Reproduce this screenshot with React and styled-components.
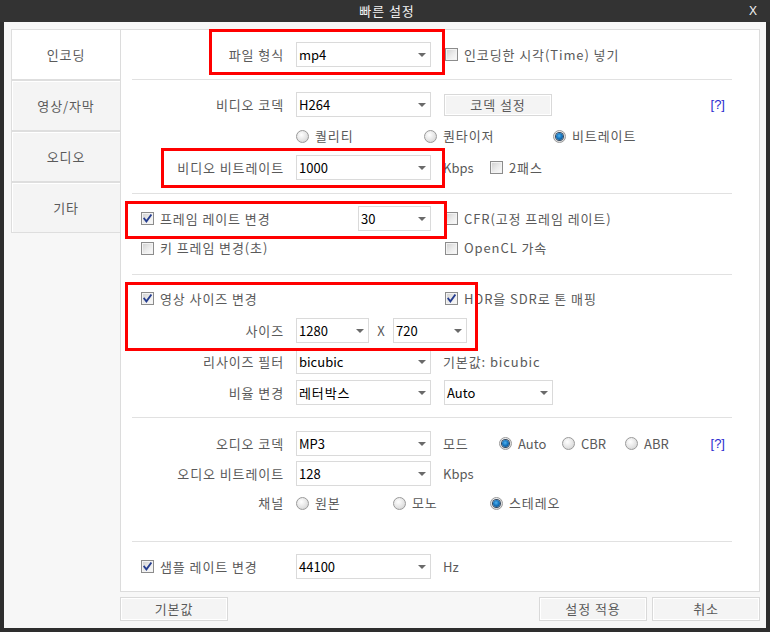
import React from 'react';
import styled, { createGlobalStyle } from 'styled-components';

const Global = createGlobalStyle`
  html, body { margin: 0; padding: 0; background: #2b2b2b; }
  body { font-family: "Noto Sans CJK KR", "Noto Sans", sans-serif; font-size: 13px; line-height: 1.2; }
  * { box-sizing: border-box; }
`;

const KO = '0.9px';

const Window = styled.div`
  width: 770px;
  height: 632px;
  background: #2e2e2e;
  display: flex;
  flex-direction: column;
  padding: 0 4px 4px 4px;
`;

const TitleBar = styled.div`
  height: 22px;
  display: grid;
  grid-template-columns: 1fr auto 1fr;
  align-items: center;
  color: #f2f2f2;
  font-size: 13px;
  margin: 0 -4px;
  background: #333;
`;

const Title = styled.div`
  grid-column: 2;
  padding-left: 4px;
  letter-spacing: ${KO};
`;

const Close = styled.div`
  grid-column: 3;
  justify-self: end;
  margin-right: 13px;
  font-family: "Liberation Sans", sans-serif;
  font-size: 12px;
`;

const Body = styled.div`
  flex: 1;
  background: #f7f7f7;
  display: grid;
  grid-template-columns: 109px 640px;
  grid-template-rows: 563px 24px;
  row-gap: 5px;
  padding: 7px 6px 0 7px;
`;

const Tabs = styled.div`
  display: flex;
  flex-direction: column;
`;

const Tab = styled.div`
  height: 51px;
  border: 1px solid #dedede;
  border-right: none;
  background: ${p => (p.$active ? '#ffffff' : '#f4f4f4')};
  box-shadow: ${p => (p.$active ? 'none' : 'inset 1px 1px 0 #fff')};
  display: flex;
  align-items: center;
  justify-content: center;
  color: #5a5a5a;
  font-size: 13px;
  letter-spacing: ${KO};
`;

const Panel = styled.div`
  position: relative;
  background: #fff;
  border: 1px solid #dcdcdc;
  display: flex;
  flex-direction: column;
`;

const Section = styled.div`
  display: flex;
  flex-direction: column;
  padding: ${p => p.$pt}px 0 ${p => p.$pb}px 0;
`;

const Divider = styled.div`
  height: 1px;
  background: #e1e1e1;
  margin: 0 27px 0 11px;
`;

const Row = styled.div`
  display: flex;
  align-items: center;
  height: ${p => p.$h || 25}px;
  margin-top: ${p => p.$mt || 0}px;
  padding-left: ${p => p.$pl || 0}px;
  color: #5a5a5a;
`;

const Label = styled.div`
  flex: 0 0 163px;
  margin-right: 12px;
  text-align: right;
  color: #5a5a5a;
  white-space: nowrap;
  letter-spacing: ${KO};
`;

const SelectBox = styled.div`
  flex: 0 0 ${p => p.$w}px;
  width: ${p => p.$w}px;
  height: 25px;
  border: 1px solid #dadada;
  background: #fff;
  display: flex;
  align-items: center;
  padding-left: 2px;
  margin-left: ${p => p.$ml || 0}px;
  color: #000;
  white-space: nowrap;
  letter-spacing: ${p => (p.$ko ? KO : '0')};
`;

const Arrow = styled.span`
  margin-left: auto;
  margin-right: 4px;
  width: 0;
  height: 0;
  border-left: 4px solid transparent;
  border-right: 4px solid transparent;
  border-top: 4px solid #6a6a6a;
`;

const Text = styled.div`
  flex: 0 0 ${p => (p.$w ? `${p.$w}px` : 'auto')};
  margin-left: ${p => p.$ml || 0}px;
  text-align: ${p => (p.$center ? 'center' : 'left')};
  color: #5a5a5a;
  white-space: nowrap;
  letter-spacing: ${p => (p.$ko ? KO : '0')};
`;

const Help = styled.div`
  margin-left: auto;
  margin-right: 34px;
  color: #2b2bd0;
  font-family: "Liberation Sans", sans-serif;
  font-size: 13px;
`;

const Item = styled.div`
  flex: 0 0 ${p => (p.$w ? `${p.$w}px` : 'auto')};
  margin-left: ${p => p.$ml || 0}px;
  display: flex;
  align-items: center;
  gap: 6px;
  color: #5a5a5a;
  white-space: nowrap;
  letter-spacing: ${p => (p.$latin ? '0' : KO)};
`;

const CheckBox = styled.span`
  flex: 0 0 13px;
  width: 13px;
  height: 13px;
  border: 1px solid #8c8c8c;
  background: linear-gradient(135deg, #cfcfcf 0%, #ececec 55%, #fbfbfb 100%);
  box-shadow: inset 0 0 0 1px #f3f3f3;
  display: flex;
  align-items: center;
  justify-content: center;
`;

const RadioDot = styled.span`
  flex: 0 0 13px;
  width: 13px;
  height: 13px;
  border-radius: 50%;
  border: 1px solid #9a9a9a;
  background: radial-gradient(circle at 40% 35%, #ffffff 0%, #e2e2e2 60%, #c9c9c9 100%);
  display: flex;
  align-items: center;
  justify-content: center;
  &::after {
    content: '';
    display: ${p => (p.$on ? 'block' : 'none')};
    width: 7px;
    height: 7px;
    border-radius: 50%;
    background: radial-gradient(circle at 45% 40%, #4fb3f0 0%, #1676c0 45%, #0d3f6e 100%);
    box-shadow: 0 0 0 1px #33485f;
  }
`;

const Button = styled.div`
  flex: 0 0 ${p => p.$w}px;
  width: ${p => p.$w}px;
  height: ${p => p.$h || 24}px;
  margin-left: ${p => p.$ml || 0}px;
  background: #f4f4f4;
  border: 1px solid #d9d9d9;
  box-shadow: inset 0 0 0 1px #fff;
  display: flex;
  align-items: center;
  justify-content: center;
  color: #5a5a5a;
  font-size: 13px;
  letter-spacing: ${KO};
`;

const ButtonBar = styled.div`
  grid-column: 2;
  display: flex;
  gap: 5px;
`;

const Spacer = styled.div`
  flex: 1;
`;

const Mark = styled.div`
  position: absolute;
  left: ${p => p.$x}px;
  top: ${p => p.$y}px;
  width: ${p => p.$w}px;
  height: ${p => p.$h}px;
  border: 3px solid #ff0000;
  pointer-events: none;
`;

const Select = ({ value, w = 135, ml, ko }) => (
  <SelectBox $w={w} $ml={ml} $ko={ko}>
    <span>{value}</span>
    <Arrow />
  </SelectBox>
);

const Check = ({ checked, children, w, ml }) => (
  <Item $w={w} $ml={ml}>
    <CheckBox>
      {checked && (
        <svg width="9" height="9" viewBox="0 0 9 9">
          <path d="M1.2 4.6 L3.4 7.4 L7.9 1.2" stroke="#253d8f" strokeWidth="1.8" fill="none" strokeLinecap="square" />
        </svg>
      )}
    </CheckBox>
    <span>{children}</span>
  </Item>
);

const Radio = ({ on, children, w, ml, latin }) => (
  <Item $w={w} $ml={ml} $latin={latin}>
    <RadioDot $on={on} />
    <span>{children}</span>
  </Item>
);

export default function App() {
  return (
    <>
      <Global />
      <Window>
        <TitleBar>
          <Title>빠른 설정</Title>
          <Close>X</Close>
        </TitleBar>
        <Body>
          <Tabs>
            <Tab $active>인코딩</Tab>
            <Tab>영상/자막</Tab>
            <Tab>오디오</Tab>
            <Tab>기타</Tab>
          </Tabs>
          <Panel>
            <Section $pt={12} $pb={12}>
              <Row>
                <Label>파일 형식</Label>
                <Select value="mp4" />
                <Check ml={14}>인코딩한 시각(Time) 넣기</Check>
              </Row>
            </Section>
            <Divider />
            <Section $pt={12} $pb={13}>
              <Row>
                <Label>비디오 코덱</Label>
                <Select value="H264" />
                <Button $w={108} $h={22} $ml={13}>코덱 설정</Button>
                <Help>[?]</Help>
              </Row>
              <Row $h={38} $pl={175}>
                <Radio w={128}>퀄리티</Radio>
                <Radio w={129}>퀀타이저</Radio>
                <Radio on>비트레이트</Radio>
              </Row>
              <Row>
                <Label>비디오 비트레이트</Label>
                <Select value="1000" />
                <Text $ml={12} $w={47}>Kbps</Text>
                <Check>2패스</Check>
              </Row>
            </Section>
            <Divider />
            <Section $pt={12} $pb={9}>
              <Row $pl={20}>
                <Check checked w={217}>프레임 레이트 변경</Check>
                <Select value="30" w={73} />
                <Check ml={14}>CFR(고정 프레임 레이트)</Check>
              </Row>
              <Row $h={34} $pl={20}>
                <Check w={304}>키 프레임 변경(초)</Check>
                <Check>OpenCL 가속</Check>
              </Row>
            </Section>
            <Divider />
            <Section $pt={11} $pb={12}>
              <Row $pl={20}>
                <Check checked w={304}>영상 사이즈 변경</Check>
                <Check checked>HDR을 SDR로 톤 매핑</Check>
              </Row>
              <Row $mt={7}>
                <Label>사이즈</Label>
                <Select value="1280" w={73} />
                <Text $w={24} $center>X</Text>
                <Select value="720" w={74} />
              </Row>
              <Row $mt={6}>
                <Label>리사이즈 필터</Label>
                <Select value="bicubic" />
                <Text $ml={12} $ko>기본값: bicubic</Text>
              </Row>
              <Row $mt={6}>
                <Label>비율 변경</Label>
                <Select value="레터박스" ko />
                <Select value="Auto" w={109} ml={13} />
              </Row>
            </Section>
            <Divider />
            <Section $pt={13} $pb={21}>
              <Row>
                <Label>오디오 코덱</Label>
                <Select value="MP3" />
                <Text $ml={12} $w={56} $ko>모드</Text>
                <Radio on w={63} latin>Auto</Radio>
                <Radio w={63} latin>CBR</Radio>
                <Radio latin>ABR</Radio>
                <Help>[?]</Help>
              </Row>
              <Row $mt={5}>
                <Label>오디오 비트레이트</Label>
                <Select value="128" />
                <Text $ml={12}>Kbps</Text>
              </Row>
              <Row $h={34}>
                <Label>채널</Label>
                <Radio w={97}>원본</Radio>
                <Radio w={97}>모노</Radio>
                <Radio on>스테레오</Radio>
              </Row>
            </Section>
            <Divider />
            <Section $pt={12} $pb={12}>
              <Row $pl={20}>
                <Check checked w={155}>샘플 레이트 변경</Check>
                <Select value="44100" />
                <Text $ml={12}>Hz</Text>
              </Row>
            </Section>

            <Mark $x={88} $y={-1} $w={236} $h={46} />
            <Mark $x={40} $y={118} $w={284} $h={40} />
            <Mark $x={4} $y={171} $w={322} $h={38} />
            <Mark $x={4} $y={252} $w={353} $h={69} />
          </Panel>
          <ButtonBar>
            <Button $w={108}>기본값</Button>
            <Spacer />
            <Button $w={108}>설정 적용</Button>
            <Button $w={108}>취소</Button>
          </ButtonBar>
        </Body>
      </Window>
    </>
  );
}
